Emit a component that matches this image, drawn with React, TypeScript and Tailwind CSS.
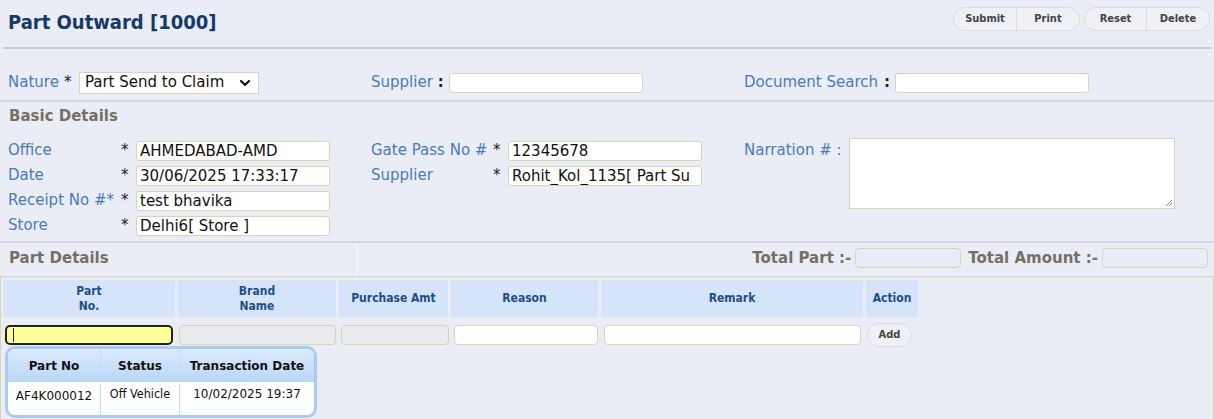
import { ChevronDown } from "lucide-react";

const label = "text-[15px] text-[#4a7bb7] whitespace-nowrap";
const field =
  "h-[20px] w-[194px] rounded-[3px] border border-[#d6d6b2] bg-white px-[3px] text-[15px] leading-[18px] text-[#111] overflow-hidden whitespace-nowrap";
const heading = "font-['DejaVu_Sans',sans-serif] text-[15px] font-bold text-[#776f66]";

function FormRow({ name, value, labelW }: { name: string; value: string; labelW: string }) {
  return (
    <div className="flex h-[25px] items-center">
      <span className={`${label} ${labelW}`}>{name}</span>
      <span className="w-[15px] text-[15px] text-[#222]">*</span>
      <div className={field}>{value}</div>
    </div>
  );
}

const cols = [
  { title: ["Part", "No."], w: "w-[172px]" },
  { title: ["Brand", "Name"], w: "w-[158px]" },
  { title: ["Purchase Amt"], w: "w-[109px]" },
  { title: ["Reason"], w: "w-[147px]" },
  { title: ["Remark"], w: "w-[262px]" },
  { title: ["Action"], w: "w-[52px]" },
];

export default function App() {
  return (
    <div className="relative h-[419px] overflow-hidden bg-[#eaedf5] font-['DejaVu_Sans',sans-serif]">
      {/* header */}
      <div className="flex h-[47px] items-start justify-between pl-[8px] pr-[4px]">
        <h1 className="pt-[7px] font-['DejaVu_Sans_Condensed',sans-serif] text-[20px] font-bold text-[#153a6a]">
          Part Outward [1000]
        </h1>
        <div className="flex gap-[4px] pt-[7px] font-['DejaVu_Sans_Condensed',sans-serif] text-[11px] font-bold text-[#444]">
          <div className="flex h-[24px] overflow-hidden rounded-full border border-[#dcdcdc] bg-[#eef0f5]">
            <span className="flex w-[63px] items-center justify-center border-r border-[#dcdcdc]">Submit</span>
            <span className="flex w-[62px] items-center justify-center">Print</span>
          </div>
          <div className="flex h-[24px] overflow-hidden rounded-full border border-[#dcdcdc] bg-[#eef0f5]">
            <span className="flex w-[62px] items-center justify-center border-r border-[#dcdcdc]">Reset</span>
            <span className="flex w-[62px] items-center justify-center">Delete</span>
          </div>
        </div>
      </div>
      <div className="mx-[3px] border-t-2 border-[#cbcbcb]" />

      {/* nature row */}
      <div className="flex h-[51px] items-center pt-[21px] pb-[5px]">
        <div className="flex w-[371px] items-center pl-[8px]">
          <span className={label}>Nature</span>
          <span className="ml-[5px] w-[15px] text-[15px] text-[#222]">*</span>
          <div className="flex h-[22px] w-[180px] items-center justify-between border border-[#d6d6b2] bg-white pl-[5px] pr-[5px] text-[15px] text-[#111]">
            Part Send to Claim
            <ChevronDown size={16} strokeWidth={3.2} className="text-[#111]" />
          </div>
        </div>
        <div className="flex w-[373px] items-center">
          <span className={label}>Supplier</span>
          <span className="ml-[5px] mr-[5px] text-[15px] font-bold text-[#222]">:</span>
          <div className={field} />
        </div>
        <div className="flex items-center">
          <span className={label}>Document Search</span>
          <span className="ml-[6px] mr-[5px] text-[15px] font-bold text-[#222]">:</span>
          <div className={field} />
        </div>
      </div>
      <div className="border-t-2 border-[#d3d6de]" />

      {/* basic details */}
      <div className={`${heading} pl-[9px] pt-[3px] leading-[22px]`}>Basic Details</div>
      <div className="flex h-[114px] pt-[11px]">
        <div className="w-[363px] pl-[8px]">
          <FormRow name="Office" value="AHMEDABAD-AMD" labelW="w-[113px]" />
          <FormRow name="Date" value="30/06/2025 17:33:17" labelW="w-[113px]" />
          <FormRow name="Receipt No #*" value="test bhavika" labelW="w-[113px]" />
          <FormRow name="Store" value="Delhi6[ Store ]" labelW="w-[113px]" />
        </div>
        <div className="w-[373px] pl-[8px]">
          <FormRow name="Gate Pass No #" value="12345678" labelW="w-[122px]" />
          <FormRow name="Supplier" value="Rohit_Kol_1135[ Part Su" labelW="w-[122px]" />
        </div>
        <div className="flex items-start pl-[8px]">
          <span className={`${label} mt-[1px] w-[105px]`}>Narration # :</span>
          <div className="relative h-[71px] w-[326px] border border-[#d6d6b2] bg-white">
            <svg className="absolute bottom-[1px] right-[1px]" width="9" height="9" viewBox="0 0 9 9">
              <path d="M8 2L2 8M8 5L5 8" stroke="#888" strokeWidth="1" />
            </svg>
          </div>
        </div>
      </div>

      {/* part details bar */}
      <div className="flex h-[35px] border-t-2 border-[#d3d6de]">
        <div className={`${heading} flex w-[358px] items-center border-r-2 border-[#f3f4f8] pb-[3px] pl-[9px]`}>
          Part Details
        </div>
        <div className={`${heading} flex flex-1 items-center justify-end gap-[4px] pb-[3px] pr-[6px]`}>
          <span>Total Part :-</span>
          <div className="h-[20px] w-[106px] rounded-[4px] border border-[#d6d6b2] bg-[#eaedf5]" />
          <span className="ml-[3px]">Total Amount :-</span>
          <div className="h-[20px] w-[106px] rounded-[4px] border border-[#d6d6b2] bg-[#eaedf5]" />
        </div>
      </div>

      {/* table */}
      <div className="h-[200px] border border-[#d6d6b2] pl-[2px] pt-[3px]">
        <div className="flex gap-[3px] font-['DejaVu_Sans_Condensed',sans-serif] text-[12px] font-bold leading-[15px] text-[#1f4f86]">
          {cols.map((c) => (
            <div key={c.title.join()} className={`${c.w} flex h-[37px] flex-col items-center justify-center bg-[#d5e4f8] text-center`}>
              {c.title.map((t) => (
                <span key={t}>{t}</span>
              ))}
            </div>
          ))}
        </div>
        <div className="flex h-[34px] items-center pl-[2px] pt-[2px]">
          <div className="h-[20px] w-[168px] rounded-[5px] border-2 border-[#222] bg-[#ffff99]">
            <div className="ml-[6px] mt-[1px] h-[14px] w-px bg-[#222]" />
          </div>
          <div className="ml-[6px] h-[20px] w-[157px] rounded-[4px] border border-[#d6d6b2] bg-[#e9ebee]" />
          <div className="ml-[5px] h-[20px] w-[108px] rounded-[4px] border border-[#d6d6b2] bg-[#e9ebee]" />
          <div className="ml-[5px] h-[20px] w-[144px] rounded-[4px] border border-[#d6d6b2] bg-white" />
          <div className="ml-[6px] h-[20px] w-[257px] rounded-[4px] border border-[#d6d6b2] bg-white" />
          <div className="ml-[6px] flex h-[24px] w-[45px] items-center justify-center rounded-full border border-[#dcdcdc] bg-[#eef0f5] font-['DejaVu_Sans_Condensed',sans-serif] text-[11px] font-bold text-[#444]">
            Add
          </div>
        </div>
      </div>

      {/* autocomplete popup */}
      <div className="absolute left-[5px] top-[346px] w-[312px] overflow-hidden rounded-[10px] border-[3px] border-[#a9cbf3] bg-white text-[12px] text-[#111]">
        <div className="flex h-[33px] items-center bg-gradient-to-b from-[#dcebfd] to-[#b9d6f7] font-bold">
          <div className="flex h-full w-[93px] items-center justify-center border-r border-[#c4daf4]">Part No</div>
          <div className="flex h-full w-[79px] items-center justify-center border-r border-[#c4daf4]">Status</div>
          <div className="flex h-full flex-1 items-center justify-center">Transaction Date</div>
        </div>
        <div className="flex h-[33px] items-start pt-[2px]">
          <div className="flex h-[31px] w-[93px] justify-center border-r border-[#c4daf4] pt-[3px]">AF4K000012</div>
          <div className="flex h-[31px] w-[79px] justify-center border-r border-[#c4daf4] pt-[1px] font-['DejaVu_Sans_Condensed',sans-serif] text-[12.5px]">Off Vehicle</div>
          <div className="flex h-[31px] flex-1 justify-center pt-[1px]">10/02/2025 19:37</div>
        </div>
      </div>
    </div>
  );
}
